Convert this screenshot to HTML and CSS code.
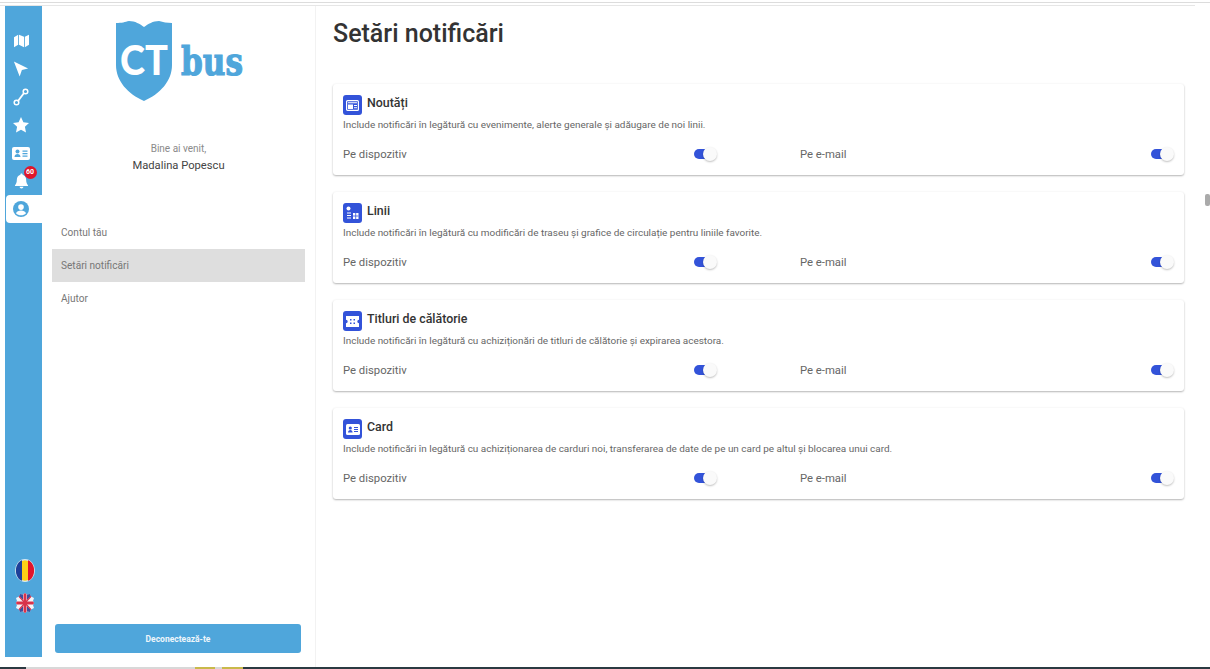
FILE: index.html
```html
<!DOCTYPE html>
<html lang="ro">
<head>
    <meta charset="UTF-8">
    <meta name="viewport" content="width=device-width, initial-scale=1.0">
    <title>Setări notificări | CT bus</title>
    <link rel="stylesheet" href="styles.css">
</head>
<body>
    <div class="top-lines"></div>
    <div class="shell">
        <nav class="rail">
            <a class="rail-item">
                <svg width="15" height="14" viewBox="0 0 18 15"><path fill="#fff" d="M0 3l5-3v12l-5 3zM6 0l6 2.500v12.500l-6-3zM13 2.500l5-2.500v12l-5 3z"/></svg>
            </a>
            <a class="rail-item">
                <svg width="16" height="18" viewBox="0 0 18 19"><path fill="#fff" d="M1 1l16 8-7 1.500-2.500 7.500z"/></svg>
            </a>
            <a class="rail-item">
                <svg width="16" height="18" viewBox="0 0 16 18"><path fill="none" stroke="#fff" stroke-width="1.800" d="M5 13L11 5"/><circle cx="3.500" cy="14.500" r="2.300" fill="none" stroke="#fff" stroke-width="1.500"/><circle cx="12.500" cy="3.500" r="2.300" fill="none" stroke="#fff" stroke-width="1.500"/></svg>
            </a>
            <a class="rail-item">
                <svg width="16" height="16" viewBox="0 0 16 16"><path fill="#fff" d="M8 0l2.400 5.200 5.600.7-4.100 3.900 1.100 5.700L8 12.700l-5 2.800 1.100-5.700L0 5.900l5.600-.7z"/></svg>
            </a>
            <a class="rail-item">
                <svg width="18" height="13" viewBox="0 0 18 13"><rect width="18" height="13" rx="2" fill="#fff"/><circle cx="5.500" cy="4.500" r="2" fill="#4fa6db"/><path fill="#4fa6db" d="M2.500 10c0-2 1.300-3 3-3s3 1 3 3zM10.500 3.500h5v1.300h-5zM10.500 6h5v1.300h-5zM10.500 8.500h5v1.300h-5z"/></svg>
            </a>
            <a class="rail-item">
                <svg width="13" height="16" viewBox="0 0 14 16"><path fill="#fff" d="M7 0c.8 0 1.200.5 1.200 1.200C10.600 1.800 12 3.800 12 6.500c0 3.500.8 4.700 2 6v1H0v-1c1.200-1.300 2-2.500 2-6 0-2.700 1.400-4.700 3.800-5.300C5.800.5 6.200 0 7 0zM5 14.300h4C9 15.300 8.100 16 7 16s-2-.7-2-1.700z"/></svg>
                <span class="badge">60</span>
            </a>
            <a class="rail-item rail-active">
                <svg width="16" height="16" viewBox="0 0 17 17"><circle cx="8.500" cy="8.500" r="8.500" fill="#4fa6db"/><circle cx="8.500" cy="6.500" r="3" fill="#fff"/><path fill="#fff" d="M3.200 13c.8-2 2.800-3 5.300-3s4.500 1 5.300 3c-1.300 1.400-3.200 2.200-5.300 2.200S4.500 14.400 3.200 13z"/></svg>
            </a>
            <div class="flags">
                <svg width="20" height="23" viewBox="0 0 20 22" preserveAspectRatio="none">
                    <ellipse cx="10" cy="11" rx="9.400" ry="10.400" fill="#fcd116" stroke="#d5e8f5" stroke-width="1.200"/>
                    <path fill="#1d3f9a" d="M7 1.100C3.400 2.200.9 6.200.9 11S3.400 19.800 7 20.900z"/>
                    <path fill="#e0142c" d="M13 1.100c3.600 1.100 6.100 5.100 6.100 9.900s-2.500 8.800-6.100 9.900z"/>
                </svg>
                <svg width="18" height="20" viewBox="0 0 18 20">
                    <defs><clipPath id="ukClip"><path d="M9 0l2 1.500L14 1l1 2.500L18 5l-1 3 1 2-1 2 1 3-3 1.500L14 19l-3-.5L9 20l-2-1.500L4 19l-1-2.500L0 15l1-3-1-2 1-2-1-3 3-1.500L4 1l3 .5z"/></clipPath></defs>
                    <g clip-path="url(#ukClip)">
                        <rect width="18" height="20" fill="#f4f4f8"/>
                        <path fill="#3c4f9e" d="M1 1h6v6zM17 1h-6v6zM1 19h6v-6zM17 19h-6v-6z"/>
                        <path stroke="#d8324a" stroke-width="1.200" d="M0 0l18 20M18 0L0 20"/>
                        <path stroke="#d8324a" stroke-width="3" d="M9 0v20M0 10h18"/>
                    </g>
                </svg>
            </div>
        </nav>

        <aside class="sidebar">
            <svg class="logo" width="150" height="82" viewBox="0 0 150 82">
                <path fill="#4fa6db" d="M1 2c6 0 9-1 13-2 6 0 11 3 15 6 4-3 9-6 15-6 4 1 8 2 13 2v42c0 16-12 29-28 36C13 73 1 60 1 44z"/>
                <text class="logo-ct" x="5" y="54" textLength="48" lengthAdjust="spacingAndGlyphs">CT</text>
                <text class="logo-bus" x="66" y="54" textLength="62" lengthAdjust="spacingAndGlyphs">bus</text>
            </svg>
            <p class="welcome">Bine ai venit,</p>
            <p class="user-name">Madalina Popescu</p>
            <ul class="side-menu">
                <li>Contul tău</li>
                <li class="selected">Setări notificări</li>
                <li>Ajutor</li>
            </ul>
            <button class="logout">Deconectează-te</button>
        </aside>

        <main class="content">
            <h1>Setări notificări</h1>

            <section class="card">
                <div class="card-head">
                    <span class="card-icon">
                        <svg width="13" height="11" viewBox="0 0 13 11"><rect x=".6" y=".6" width="11.800" height="9.800" rx="1" fill="none" stroke="#fff" stroke-width="1.200"/><rect x="2" y="4.500" width="5" height="4.500" fill="#fff"/><path fill="#fff" d="M2 2.300h9v1H2zM8 5h3v1H8zM8 7.300h3v1H8z"/></svg>
                    </span>
                    <h2>Noutăți</h2>
                </div>
                <p class="card-desc">Include notificări în legătură cu evenimente, alerte generale și adăugare de noi linii.</p>
                <div class="card-options">
                    <div class="option"><span>Pe dispozitiv</span><span class="toggle"></span></div>
                    <div class="option"><span>Pe e-mail</span><span class="toggle"></span></div>
                </div>
            </section>

            <section class="card">
                <div class="card-head">
                    <span class="card-icon">
                        <svg width="13" height="14" viewBox="0 0 13 14"><circle cx="2.500" cy="2.500" r="2" fill="#fff"/><path fill="none" stroke="#fff" d="M1 7h4M1 9.500h4M1 12h4"/><rect x="7" y="7" width="5.500" height="6" fill="#fff"/><path stroke="#3353d9" stroke-width=".8" d="M7 10h5.500M9.700 7v6"/></svg>
                    </span>
                    <h2>Linii</h2>
                </div>
                <p class="card-desc">Include notificări în legătură cu modificări de traseu și grafice de circulație pentru liniile favorite.</p>
                <div class="card-options">
                    <div class="option"><span>Pe dispozitiv</span><span class="toggle"></span></div>
                    <div class="option"><span>Pe e-mail</span><span class="toggle"></span></div>
                </div>
            </section>

            <section class="card">
                <div class="card-head">
                    <span class="card-icon">
                        <svg width="13" height="11" viewBox="0 0 13 11"><path fill="#fff" d="M0 0h13v3.800a1.700 1.700 0 0 0 0 3.400V11H0V7.200a1.700 1.700 0 0 0 0-3.400z"/><path fill="#3353d9" d="M4 3h1.500v1.500H4zM7.500 3H9v1.500H7.500zM4 6.500h1.500V8H4zM7.500 6.500H9V8H7.500z"/></svg>
                    </span>
                    <h2>Titluri de călătorie</h2>
                </div>
                <p class="card-desc">Include notificări în legătură cu achiziționări de titluri de călătorie și expirarea acestora.</p>
                <div class="card-options">
                    <div class="option"><span>Pe dispozitiv</span><span class="toggle"></span></div>
                    <div class="option"><span>Pe e-mail</span><span class="toggle"></span></div>
                </div>
            </section>

            <section class="card">
                <div class="card-head">
                    <span class="card-icon">
                        <svg width="14" height="11" viewBox="0 0 14 11"><rect width="14" height="11" rx="1.500" fill="#fff"/><circle cx="4.300" cy="4" r="1.600" fill="#3353d9"/><path fill="#3353d9" d="M2 8.500c0-1.600 1-2.500 2.300-2.500s2.300.9 2.300 2.500zM8 3h4v1H8zM8 5h4v1H8zM8 7h4v1H8z"/></svg>
                    </span>
                    <h2>Card</h2>
                </div>
                <p class="card-desc">Include notificări în legătură cu achiziționarea de carduri noi, transferarea de date de pe un card pe altul și blocarea unui card.</p>
                <div class="card-options">
                    <div class="option"><span>Pe dispozitiv</span><span class="toggle"></span></div>
                    <div class="option"><span>Pe e-mail</span><span class="toggle"></span></div>
                </div>
            </section>

            <div class="scroll-thumb"></div>
        </main>
    </div>
    <div class="taskbar">
        <span class="task-dark"></span>
        <span class="task-light"></span>
        <span class="task-yellow"></span>
        <span class="task-gap"></span>
        <span class="task-yellow task-yellow-2"></span>
    </div>
</body>
</html>
```

FILE: styles.css
```css
* {
    box-sizing: border-box;
}
html, body {
    height: 100%;
}
body {
    margin: 0;
    height: 669px;
    overflow: hidden;
    display: flex;
    flex-direction: column;
    background: #fff;
    font-family: Roboto, "Liberation Sans", sans-serif;
    color: #444;
}

/* lines at the very top */
.top-lines {
    height: 6px;
    padding-top: 2px;
    border-bottom: 1px solid #e6e6e6;
    margin-right: 15px;
    position: relative;
    flex: none;
}
.top-lines::before {
    content: "";
    position: absolute;
    top: 2px;
    left: 0;
    width: 1210px;
    height: 1px;
    background: #dcdcdc;
}

.shell {
    flex: 1;
    display: flex;
    min-height: 0;
}

/* blue icon rail */
.rail {
    width: 37px;
    margin-left: 5px;
    margin-bottom: 10px;
    padding-top: 21px;
    display: flex;
    flex-direction: column;
    background: #4fa6db;
    flex: none;
}
.rail-item {
    height: 28px;
    padding-right: 5px;
    display: flex;
    align-items: center;
    justify-content: center;
    position: relative;
    flex: none;
}
.rail-active {
    margin-left: 1px;
    padding-right: 6px;
    background: #fff;
    border-radius: 4px 0 0 4px;
}
.badge {
    position: absolute;
    top: -1px;
    left: 18.500px;
    width: 13px;
    height: 13px;
    border-radius: 50%;
    background: #e0162b;
    color: #fff;
    font-size: 7px;
    font-weight: 700;
    line-height: 13px;
    text-align: center;
}
.flags {
    margin-top: auto;
    padding: 0 0 44px 2px;
    display: flex;
    flex-direction: column;
    align-items: center;
    gap: 11px;
}

/* sidebar */
.sidebar {
    width: 274px;
    padding: 15px 10px 14px;
    border-right: 1px solid #f2f2f2;
    display: flex;
    flex-direction: column;
    align-items: center;
    flex: none;
}
.logo {
    align-self: flex-start;
    margin-left: 63px;
    flex: none;
}
.logo-ct {
    font-family: Lato, "Open Sans", sans-serif;
    font-size: 41px;
    font-weight: 900;
    fill: #fff;
}
.logo-bus {
    font-family: "DejaVu Serif", serif;
    font-size: 39px;
    font-weight: 700;
    fill: #4fa6db;
    stroke: #4fa6db;
    stroke-width: 1.2px;
}
.welcome {
    margin: 39px 0 0;
    font-size: 10px;
    line-height: 13px;
    color: #8a8a8a;
}
.user-name {
    margin: 3px 0 0;
    font-size: 11.200px;
    line-height: 16px;
    color: #444;
}
.side-menu {
    width: 100%;
    margin: 42px 0 0;
    padding: 0;
    list-style: none;
}
.side-menu li {
    height: 33px;
    padding-left: 9px;
    font-size: 10.100px;
    line-height: 33px;
    color: #777;
}
.side-menu .selected {
    background: #dedede;
}
.logout {
    width: 246px;
    height: 29px;
    margin-top: auto;
    align-self: flex-start;
    margin-left: 3px;
    border: none;
    border-radius: 3px;
    background: #4fa6db;
    color: #eef6fb;
    font-family: inherit;
    font-size: 8.500px;
    font-weight: 700;
}

/* main area */
.content {
    flex: 1;
    padding: 0 26px 0 17px;
    position: relative;
    min-width: 0;
}
h1 {
    margin: 11px 0 33px;
    font-size: 25px;
    line-height: 34px;
    font-weight: 500;
    color: #333;
}
.card {
    height: 91px;
    margin-bottom: 17px;
    padding: 11px 10px 0;
    border-radius: 3px;
    background: #fff;
    box-shadow: 0 1px 2px rgba(0, 0, 0, 0.28), 0 0 3px rgba(0, 0, 0, 0.04);
}
.card-head {
    display: flex;
    align-items: flex-start;
    gap: 5px;
}
.card-icon {
    width: 19px;
    height: 20px;
    border-radius: 3px;
    background: #3353d9;
    display: flex;
    align-items: center;
    justify-content: center;
    flex: none;
}
h2 {
    margin: 0;
    font-size: 12.400px;
    line-height: 16px;
    font-weight: 500;
    color: #333;
}
.card-desc {
    margin: 3px 0 0;
    font-size: 9.950px;
    line-height: 13px;
    color: #666;
}
.card-options {
    margin-top: 16px;
    display: grid;
    grid-template-columns: 375px 375px;
    gap: 82px;
    font-size: 11.300px;
    line-height: 16px;
    color: #666;
}
.option {
    display: flex;
    align-items: center;
    justify-content: space-between;
}
.toggle {
    width: 24px;
    height: 14px;
    margin-bottom: 2px;
    position: relative;
}
.toggle::before {
    content: "";
    position: absolute;
    top: 2px;
    left: 0;
    width: 18px;
    height: 10px;
    border-radius: 5px;
    background: #3353d9;
}
.toggle::after {
    content: "";
    position: absolute;
    top: 0;
    right: 1px;
    width: 14px;
    height: 14px;
    border-radius: 50%;
    background: #fafafa;
    box-shadow: 0 1px 2px rgba(0, 0, 0, 0.25);
}
.scroll-thumb {
    position: absolute;
    top: 188px;
    right: 0;
    width: 5px;
    height: 12px;
    border-radius: 2px;
    background: #aaa;
}

/* strip of the window below the page */
.taskbar {
    height: 2px;
    display: flex;
    background: #2b3a42;
    flex: none;
}
.task-dark {
    width: 26px;
}
.task-light {
    width: 169px;
    background: #d8d8d8;
}
.task-yellow {
    width: 20px;
    background: #c9b94a;
}
.task-gap {
    width: 7px;
    background: #d8d8d8;
}
.task-yellow-2 {
    width: 21px;
}
```
